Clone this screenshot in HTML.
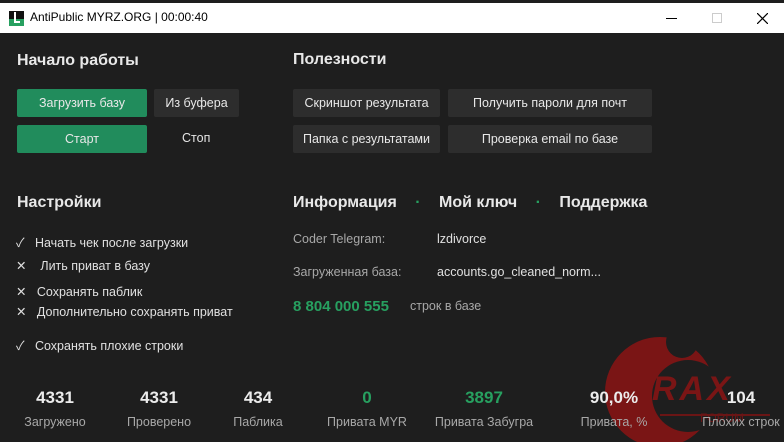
<!DOCTYPE html>
<html><head><meta charset="utf-8"><style>
*{margin:0;padding:0;box-sizing:border-box}
body{width:784px;height:442px;overflow:hidden;background:#1e1e1e;font-family:"Segoe UI","Liberation Sans","Noto Sans CJK SC",sans-serif;color:#e6e6e6;position:relative}
.a{position:absolute;white-space:nowrap}
.tb{position:absolute;left:0;top:3px;width:784px;height:30px;background:#fff;color:#000;font-size:12px}
.h{font-size:16px;font-weight:bold;color:#e8e8e8}
.btn{position:absolute;height:28px;border-radius:2px;font-size:12.5px;display:flex;align-items:center;justify-content:center;color:#e8e8e8}
.g{background:#218c5c}
.d{background:#2d2d2d}
.chk{font-size:12.5px;color:#e0e0e0}
.lbl{font-size:12.5px;color:#a8a8a8}
.st{position:absolute;width:120px;text-align:center}
.st b{display:block;font-size:17px;color:#ececec;line-height:20px}
.st span{display:block;font-size:12.5px;color:#a8a8a8;margin-top:7px}
</style></head><body>
<svg class="a" style="left:590px;top:320px" width="194" height="122">
<defs><mask id="m"><rect width="194" height="122" fill="#fff"/><circle cx="98" cy="76" r="36" fill="#000"/><circle cx="92" cy="22" r="16" fill="#000"/></mask></defs>
<circle cx="70" cy="72" r="55" fill="#7a1515" mask="url(#m)"/>
<text x="62" y="80" font-family="Liberation Sans" font-weight="bold" font-style="italic" font-size="34" fill="#7a1515" letter-spacing="3">RAX</text>
<text x="110" y="102" font-family="Liberation Sans" font-size="12" fill="#6a1515">FORUM</text>
<rect x="70" y="94" width="110" height="2" fill="#6a1515"/>
</svg>
<div class="tb">
<div class="a" style="left:9px;top:8px;width:15px;height:15px;background:#111"></div>
<div class="a" style="left:9px;top:16px;width:15px;height:7px;background:#27a060"></div>
<div class="a" style="left:14px;top:9px;width:2px;height:11px;background:#fff"></div>
<div class="a" style="left:14px;top:18px;width:6px;height:2px;background:#fff"></div>
<div class="a" style="left:30px;top:7px">AntiPublic MYRZ.ORG | 00:00:40</div>
<div class="a" style="left:666px;top:15px;width:11px;height:1px;background:#000"></div>
<div class="a" style="left:712px;top:10px;width:10px;height:10px;border:1px solid #ccc"></div>
<svg class="a" style="left:757px;top:10px" width="11" height="11"><path d="M0 0L11 11M11 0L0 11" stroke="#000" stroke-width="1.2"/></svg>
</div>
<div class="a h" style="left:17px;top:52px">Начало работы</div>
<div class="btn g" style="left:17px;top:89px;width:130px">Загрузить базу</div>
<div class="btn d" style="left:154px;top:89px;width:85px">Из буфера</div>
<div class="btn g" style="left:17px;top:125px;width:130px">Старт</div>
<div class="a" style="left:182px;top:131px;font-size:12.5px">Стоп</div>
<div class="a h" style="left:293px;top:51px">Полезности</div>
<div class="btn d" style="left:293px;top:89px;width:147px">Скриншот результата</div>
<div class="btn d" style="left:448px;top:89px;width:204px">Получить пароли для почт</div>
<div class="btn d" style="left:293px;top:125px;width:147px">Папка с результатами</div>
<div class="btn d" style="left:448px;top:125px;width:204px">Проверка email по базе</div>
<div class="a h" style="left:17px;top:194px">Настройки</div>
<div class="a chk" style="left:16px;top:232px">✓&nbsp;&nbsp;&nbsp;Начать чек после загрузки</div>
<div class="a chk" style="left:16px;top:258px">✕&nbsp;&nbsp;&nbsp;&nbsp;Лить приват в базу</div>
<div class="a chk" style="left:16px;top:284px">✕&nbsp;&nbsp;&nbsp;Сохранять паблик</div>
<div class="a chk" style="left:16px;top:304px">✕&nbsp;&nbsp;&nbsp;Дополнительно сохранять приват</div>
<div class="a chk" style="left:16px;top:335px">✓&nbsp;&nbsp;&nbsp;Сохранять плохие строки</div>
<div class="a h" style="left:293px;top:194px">Информация <span style="color:#27a060;margin:0 14px">·</span> Мой ключ <span style="color:#27a060;margin:0 14px">·</span> Поддержка</div>
<div class="a lbl" style="left:293px;top:232px">Coder Telegram:</div>
<div class="a chk" style="left:437px;top:232px">lzdivorce</div>
<div class="a lbl" style="left:293px;top:265px">Загруженная база:</div>
<div class="a chk" style="left:437px;top:265px">accounts.go_cleaned_norm...</div>
<div class="a" style="left:293px;top:298px;font-size:15px;font-weight:bold;color:#27a060">8 804 000 555</div>
<div class="a lbl" style="left:410px;top:299px">строк в базе</div>
<div class="st" style="left:-5px;top:388px"><b>4331</b><span>Загружено</span></div>
<div class="st" style="left:99px;top:388px"><b>4331</b><span>Проверено</span></div>
<div class="st" style="left:198px;top:388px"><b>434</b><span>Паблика</span></div>
<div class="st" style="left:307px;top:388px"><b style="color:#27a060">0</b><span>Привата MYR</span></div>
<div class="st" style="left:424px;top:388px"><b style="color:#27a060">3897</b><span>Привата Забугра</span></div>
<div class="st" style="left:554px;top:388px"><b>90,0%</b><span>Привата, %</span></div>
<div class="st" style="left:681px;top:388px"><b>104</b><span>Плохих строк</span></div>
</body></html>
